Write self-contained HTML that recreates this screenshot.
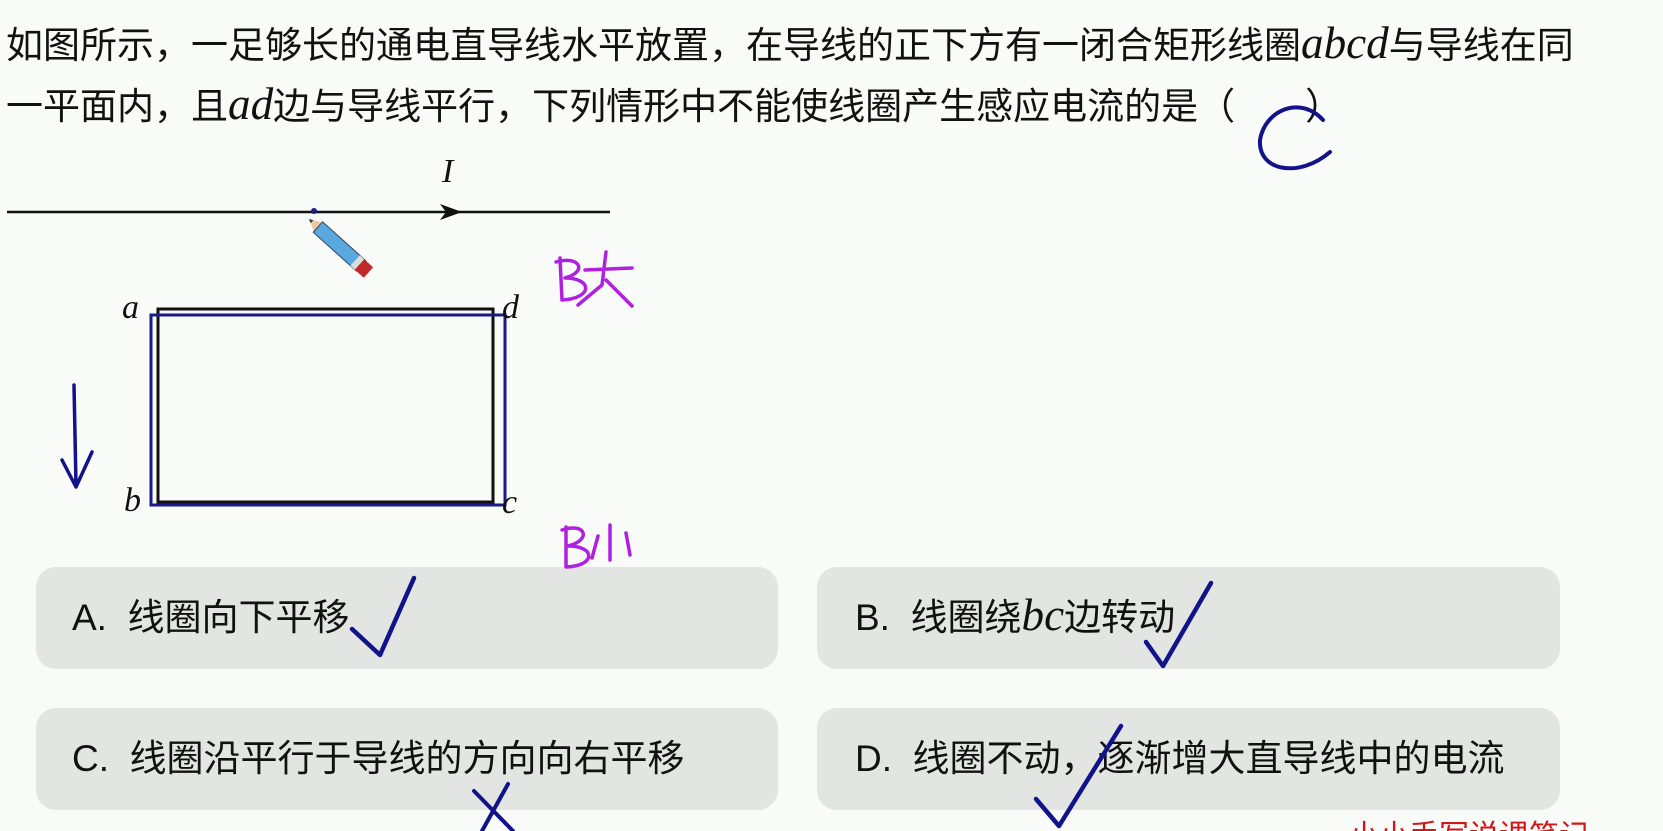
<!DOCTYPE html>
<html><head><meta charset="utf-8"><style>
html,body{margin:0;padding:0;}
body{width:1663px;height:831px;background:#f8fbf8;position:relative;overflow:hidden;font-family:"Liberation Sans","Noto Sans CJK SC",sans-serif;color:#111;}
.l{position:absolute;left:6px;font-size:37px;white-space:nowrap;line-height:40px;}
.m{font-family:"Liberation Serif","DejaVu Serif",serif;font-style:italic;font-size:1.22em;line-height:30px;}
.box{position:absolute;background:#e3e5e2;border-radius:20px;}
.opt{position:absolute;font-size:37px;line-height:40px;white-space:nowrap;color:#111;}
</style></head><body>
<div class="l" style="top:26px">如图所示，一足够长的通电直导线水平放置，在导线的正下方有一闭合矩形线圈<span class="m">abcd</span>与导线在同</div>
<div class="l" style="top:87px">一平面内，且<span class="m">ad</span>边与导线平行，下列情形中不能使线圈产生感应电流的是（<span style="display:inline-block;width:70px"></span>）</div>

<div class="box" style="left:36px;top:567px;width:742px;height:102px"></div>
<div class="box" style="left:817px;top:567px;width:743px;height:102px"></div>
<div class="box" style="left:36px;top:708px;width:742px;height:102px"></div>
<div class="box" style="left:817px;top:708px;width:743px;height:102px"></div>
<div class="opt" style="left:72px;top:598px">A.&nbsp; 线圈向下平移</div>
<div class="opt" style="left:855px;top:598px">B.&nbsp; 线圈绕<span class="m">bc</span>边转动</div>
<div class="opt" style="left:72px;top:739px">C.&nbsp; 线圈沿平行于导线的方向向右平移</div>
<div class="opt" style="left:855px;top:739px">D.&nbsp; 线圈不动，逐渐增大直导线中的电流</div>

<svg width="1663" height="831" style="position:absolute;left:0;top:0" xmlns="http://www.w3.org/2000/svg">
<line x1="7" y1="212" x2="610" y2="212" stroke="#111" stroke-width="2.5"/>
<path d="M440 204 L462 212 L440 220 L446 212 Z" fill="#111"/>
<text x="442" y="182" font-family="Liberation Serif,serif" font-style="italic" font-size="34" fill="#111">I</text>
<circle cx="314" cy="211" r="3" fill="#1a1a8a"/>
<g transform="translate(309,219) rotate(42)">
<polygon points="0,0 12,-6 12,6" fill="#f0c8a0"/>
<polygon points="0,0 4,-2 4,2" fill="#333"/>
<rect x="12" y="-7" width="58" height="14" fill="#5aa8e0" stroke="#345" stroke-width="1"/>
<rect x="62" y="-7" width="6" height="14" fill="#ddd"/>
<rect x="68" y="-7" width="12" height="14" fill="#c0282a"/>
</g>
<rect x="158" y="309" width="335" height="193" fill="none" stroke="#111" stroke-width="3"/>
<rect x="151" y="315" width="354" height="190" fill="none" stroke="#1a1a8a" stroke-width="3"/>
<g font-family="Liberation Serif,serif" font-style="italic" font-size="34" fill="#111">
<text x="122" y="318">a</text><text x="502" y="318">d</text>
<text x="124" y="511">b</text><text x="502" y="513">c</text>
</g>
<g fill="none" stroke-linecap="round" stroke-linejoin="round">
<path d="M1323 120 C1300 95 1265 110 1260 140 C1258 172 1300 178 1330 152" stroke="#12128a" stroke-width="4"/>
<path d="M74 385 L76 485 M62 460 L76 487 L92 452" stroke="#12128a" stroke-width="3.5"/>
<path d="M352 629 L380 655 L414 578" stroke="#12128a" stroke-width="4.5"/>
<path d="M1146 642 L1163 666 L1211 583" stroke="#12128a" stroke-width="4.5"/>
<path d="M1036 799 L1059 826 L1121 726" stroke="#12128a" stroke-width="4.5"/>
<path d="M474 791 L513 831 M508 784 L482 831" stroke="#12128a" stroke-width="4"/>
<path d="M560 258 L562 300 M556 262 C580 255 588 272 565 278 C592 278 594 298 562 300 M585 270 L632 268 M606 252 L602 285 L578 305 M606 280 L632 306" stroke="#b020e0" stroke-width="3.5"/>
<path d="M566 527 L566 565 M562 530 C586 522 592 540 568 546 C596 546 596 566 566 567 M610 525 L610 560 M598 536 L592 558 M626 533 L630 555" stroke="#b020e0" stroke-width="3.5"/>
</g>
<text x="1349" y="846" font-family="Liberation Sans,Noto Sans CJK SC,sans-serif" font-size="30" fill="#d01818">小小手写说课笔记</text>
</svg>
</body></html>
